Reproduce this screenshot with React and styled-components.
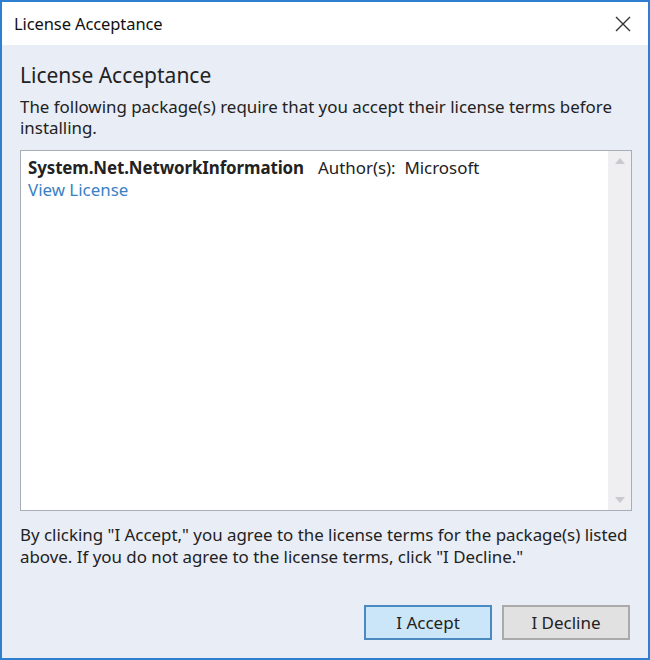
import React from "react";
import styled, { createGlobalStyle } from "styled-components";

const GlobalStyle = createGlobalStyle`
  html, body {
    margin: 0;
    padding: 0;
    background: #ffffff;
  }
  body {
    font-family: "Noto Sans", "Open Sans", sans-serif;
    color: #1e1e1e;
  }
`;

const Window = styled.div`
  width: 650px;
  height: 660px;
  box-sizing: border-box;
  border: 2px solid #2f7fd0;
  display: flex;
  flex-direction: column;
  overflow: hidden;
`;

const TitleBar = styled.div`
  height: 43px;
  background: #ffffff;
  display: flex;
  align-items: center;
  justify-content: space-between;
  padding: 0 15px 0 12px;
  flex-shrink: 0;
`;

const TitleText = styled.span`
  font-size: 16.5px;
  color: #111;
  letter-spacing: -0.1px;
`;

const CloseButton = styled.button`
  border: none;
  background: transparent;
  padding: 0;
  width: 20px;
  height: 20px;
  display: flex;
  align-items: center;
  justify-content: center;
  cursor: pointer;
`;

const Body = styled.div`
  flex: 1;
  background: #e9edf6;
  padding: 16px 16px 18px 18px;
  display: flex;
  flex-direction: column;
`;

const Heading = styled.h1`
  margin: 0;
  font-size: 21px;
  font-weight: 400;
  line-height: 28px;
  color: #222;
`;

const Paragraph = styled.p`
  margin: ${(p) => p.$top || 0}px 0 0;
  font-size: 16.9px;
  line-height: 21px;
  color: #222;
  white-space: nowrap;
`;

const ListBox = styled.div`
  margin-top: 12px;
  height: 361px;
  box-sizing: border-box;
  border: 1px solid #a9adb5;
  background: #ffffff;
  display: flex;
  width: 612px;
`;

const ListContent = styled.div`
  flex: 1;
  padding: 6px 7px;
`;

const PackageRow = styled.div`
  font-size: 16.9px;
  line-height: 22px;
  color: #222;
  white-space: nowrap;
`;

const PackageName = styled.span`
  font-weight: 700;
  letter-spacing: -0.1px;
  margin-right: 14px;
`;

const LicenseLink = styled.a`
  display: block;
  font-size: 16.9px;
  line-height: 22px;
  color: #3a7fc4;
  text-decoration: none;
  cursor: pointer;
`;

const Scrollbar = styled.div`
  width: 23px;
  background: #efeff1;
  display: flex;
  flex-direction: column;
  justify-content: space-between;
  align-items: center;
  padding: 7px 0;
`;

const Footer = styled(Paragraph)`
  line-height: 22px;
`;

const ButtonRow = styled.div`
  margin-top: auto;
  display: flex;
  justify-content: flex-end;
  gap: 10px;
  padding-right: 2px;
`;

const Button = styled.button`
  width: 128px;
  height: 35px;
  box-sizing: border-box;
  font-family: "Noto Sans", "Open Sans", sans-serif;
  font-size: 17px;
  color: #222;
  background: ${(p) => (p.$primary ? "#cbe6f8" : "#e1e1e1")};
  border: 2px solid ${(p) => (p.$primary ? "#4a8ac0" : "#aaaaaa")};
  cursor: pointer;
`;

function Arrow({ up }) {
  return (
    <svg width="10" height="6" viewBox="0 0 10 6">
      <path d={up ? "M0 6 L5 0 L10 6 Z" : "M0 0 L5 6 L10 0 Z"} fill="#c9cacd" />
    </svg>
  );
}

export default function App() {
  return (
    <>
      <GlobalStyle />
      <Window>
        <TitleBar>
          <TitleText>License Acceptance</TitleText>
          <CloseButton aria-label="Close">
            <svg width="16" height="16" viewBox="0 0 16 16">
              <path d="M1 1 L15 15 M15 1 L1 15" stroke="#333" strokeWidth="1.4" />
            </svg>
          </CloseButton>
        </TitleBar>
        <Body>
          <Heading>License Acceptance</Heading>
          <Paragraph $top={7}>
            The following package(s) require that you accept their license terms before
            <br />
            installing.
          </Paragraph>
          <ListBox>
            <ListContent>
              <PackageRow>
                <PackageName>System.Net.NetworkInformation</PackageName>
                Author(s):&nbsp; Microsoft
              </PackageRow>
              <LicenseLink>View License</LicenseLink>
            </ListContent>
            <Scrollbar>
              <Arrow up />
              <Arrow />
            </Scrollbar>
          </ListBox>
          <Footer $top={13}>
            By clicking "I Accept," you agree to the license terms for the package(s) listed
            <br />
            above. If you do not agree to the license terms, click "I Decline."
          </Footer>
          <ButtonRow>
            <Button $primary>I Accept</Button>
            <Button>I Decline</Button>
          </ButtonRow>
        </Body>
      </Window>
    </>
  );
}
